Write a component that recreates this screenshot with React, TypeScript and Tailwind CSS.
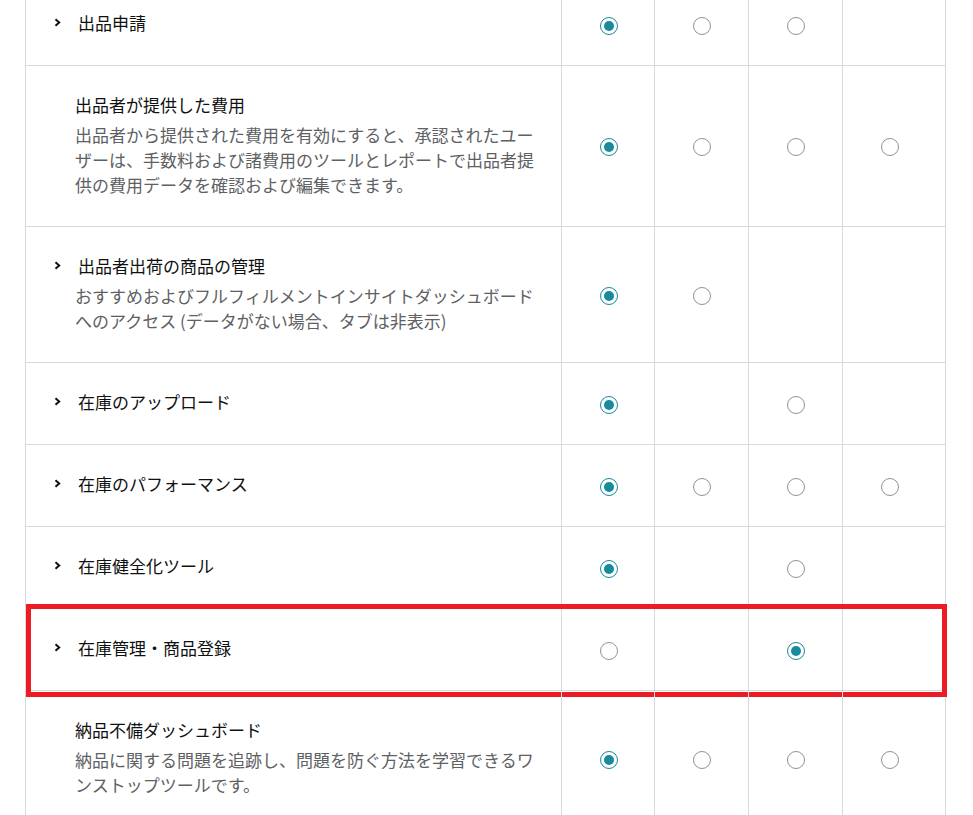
import React from 'react';

type Cell = 'on' | 'off' | null;

interface PermissionRow {
  title: string;
  description?: string;
  expandable: boolean;
  cells: Cell[];
  highlighted?: boolean;
}

const rows: PermissionRow[] = [
  { title: '出品申請', expandable: true, cells: ['on', 'off', 'off', null] },
  {
    title: '出品者が提供した費用',
    description:
      '出品者から提供された費用を有効にすると、承認されたユーザーは、手数料および諸費用のツールとレポートで出品者提供の費用データを確認および編集できます。',
    expandable: false,
    cells: ['on', 'off', 'off', 'off'],
  },
  {
    title: '出品者出荷の商品の管理',
    description: 'おすすめおよびフルフィルメントインサイトダッシュボードへのアクセス (データがない場合、タブは非表示)',
    expandable: true,
    cells: ['on', 'off', null, null],
  },
  { title: '在庫のアップロード', expandable: true, cells: ['on', null, 'off', null] },
  { title: '在庫のパフォーマンス', expandable: true, cells: ['on', 'off', 'off', 'off'] },
  { title: '在庫健全化ツール', expandable: true, cells: ['on', null, 'off', null] },
  { title: '在庫管理・商品登録', expandable: true, cells: ['off', null, 'on', null], highlighted: true },
  {
    title: '納品不備ダッシュボード',
    description: '納品に関する問題を追跡し、問題を防ぐ方法を学習できるワンストップツールです。',
    expandable: false,
    cells: ['on', 'off', 'off', 'off'],
  },
];

const Radio: React.FC<{ checked: boolean }> = ({ checked }) =>
  checked ? (
    <span className="flex h-[18px] w-[18px] items-center justify-center rounded-full border border-[#178a9b] bg-white">
      <span className="h-[10px] w-[10px] rounded-full bg-[#178a9b]" />
    </span>
  ) : (
    <span className="block h-[18px] w-[18px] rounded-full border border-[#8d9496] bg-white" />
  );

const Chevron = () => (
  <svg width="7" height="9" viewBox="0 0 7 9" className="shrink-0">
    <polyline points="1.5,1.2 5.2,4.5 1.5,7.8" fill="none" stroke="#0f1111" strokeWidth="2" />
  </svg>
);

const Row: React.FC<{ row: PermissionRow }> = ({ row }) => (
  <div className="relative grid grid-cols-[535px_93px_94px_94px_103px] border-b border-[#d5dbdb]">
    <div className={`pt-[27px] pl-[49px] pr-[20px] ${row.description ? 'pb-[29px]' : 'pb-[31px]'}`}>
      <div className="flex h-[23px] items-center text-[17px] leading-[23px] text-[#0f1111]">
        {row.expandable && (
          <span className="-ml-[21px] flex w-[24px] shrink-0 items-center">
            <Chevron />
          </span>
        )}
        <span>{row.title}</span>
      </div>
      {row.description && (
        <p className="mt-[6px] max-w-[462px] text-[17px] leading-[25px] text-[#5d6164]">{row.description}</p>
      )}
    </div>
    {row.cells.map((c, i) => (
      <div key={i} className="flex items-center border-l border-[#d5dbdb] pt-[2px] pl-[38px]">
        {c && <Radio checked={c === 'on'} />}
      </div>
    ))}
    {row.highlighted && (
      <div className="pointer-events-none absolute -top-[5px] -bottom-[7px] left-0 -right-[2px] border-[5px] border-[#ed1c24]" />
    )}
  </div>
);

export default function App() {
  return (
    <div className="h-[815px] w-[973px] overflow-hidden bg-white font-['Noto_Sans_CJK_JP',sans-serif]">
      <div className="-mt-[16px] ml-[25px] w-[921px] border-x border-[#d5dbdb]">
        {rows.map((row) => (
          <Row key={row.title} row={row} />
        ))}
      </div>
    </div>
  );
}
